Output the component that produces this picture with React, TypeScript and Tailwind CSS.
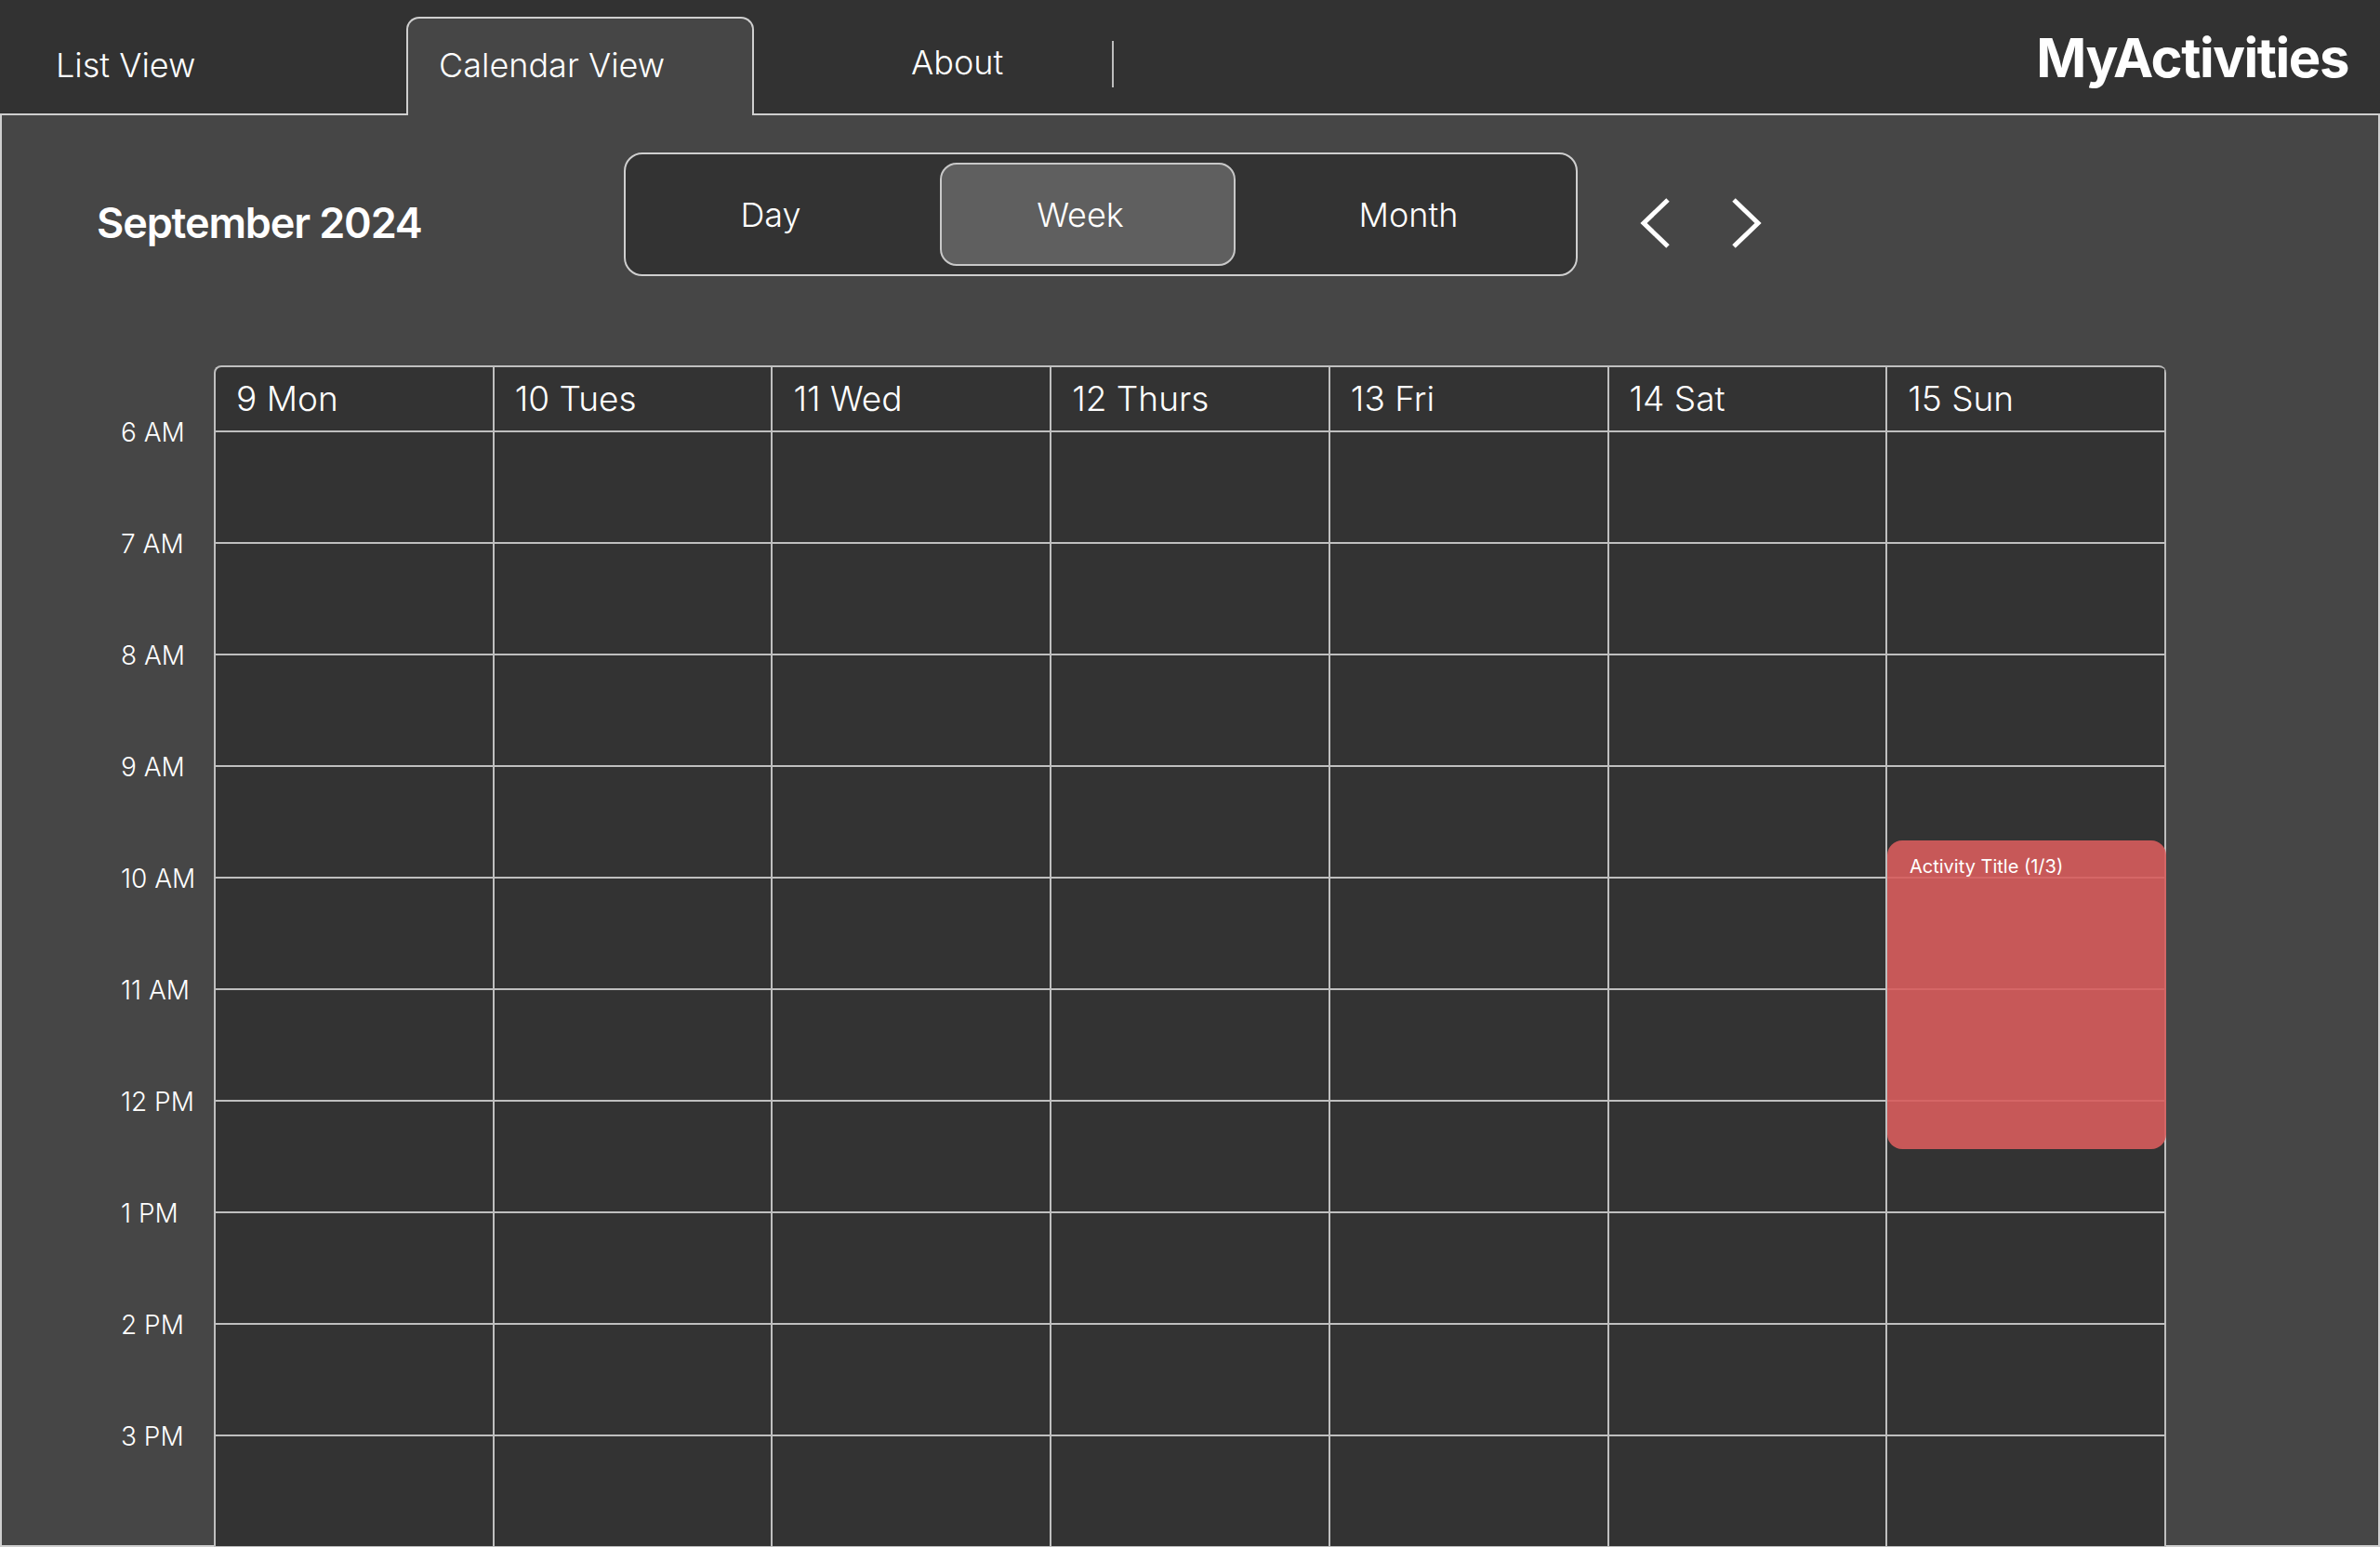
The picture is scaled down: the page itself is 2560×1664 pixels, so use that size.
import React from "react";

const days = ["9 Mon", "10 Tues", "11 Wed", "12 Thurs", "13 Fri", "14 Sat", "15 Sun"];
const hours = ["6 AM", "7 AM", "8 AM", "9 AM", "10 AM", "11 AM", "12 PM", "1 PM", "2 PM", "3 PM"];

const Chevron = ({ dir }: { dir: "left" | "right" }) => (
  <svg width="34" height="54" viewBox="0 0 34 54" fill="none">
    <polyline
      points={dir === "left" ? "30,2 4,27 30,52" : "4,2 30,27 4,52"}
      stroke="white"
      strokeWidth="5"
      strokeLinejoin="miter"
    />
  </svg>
);

const Header = () => {
  return (
    <header className="flex h-[122px] shrink-0 items-start text-white">
      <div className="w-[437px] pl-[60px] pt-[48px] text-[36px] font-light leading-[44px]">List View</div>
      <div className="relative z-10 mt-[18px] h-[106px] w-[374px] rounded-t-[14px] border-2 border-b-0 border-[#cfcfcf] bg-[#464646] pl-[33px] pt-[28px] text-[36px] font-light leading-[44px]">
        Calendar View
      </div>
      <div className="ml-[169px] pt-[45px] text-[36px] font-light leading-[44px]">About</div>
      <div className="ml-[117px] mt-[44px] h-[50px] w-[2px] bg-[#bdbdbd]" />
      <div className="ml-auto pr-[34px] pt-[27px] text-[58px] font-bold leading-[70px] tracking-tight">MyActivities</div>
    </header>
  );
};

const Toolbar = () => {
  return (
    <div className="flex items-start text-white">
      <div className="w-[669px] pl-[102px] pt-[88px] text-[45px] font-semibold leading-[56px] tracking-tight">
        September 2024
      </div>
      <div className="mt-[40px] flex h-[133px] w-[1026px] items-center rounded-[20px] border-2 border-[#cfcfcf] bg-[#333333] px-[10px] text-[36px] font-light leading-[44px]">
        <div className="w-[292px] text-center">Day</div>
        <div className="ml-[36px] flex h-[111px] w-[318px] items-center justify-center rounded-[18px] border-2 border-[#c8c8c8] bg-[#5f5f5f] pr-[16px]">
          Week
        </div>
        <div className="flex-1 pl-[16px] text-center">Month</div>
      </div>
      <div className="ml-[67px] mt-[89px] flex gap-[63px]">
        <Chevron dir="left" />
        <Chevron dir="right" />
      </div>
    </div>
  );
};

const WeekGrid = () => {
  return (
    <div className="mt-[96px] flex items-start text-white">
      <div className="w-[228px] shrink-0 pl-[128px] pt-[54px]">
        {hours.map((h) => (
          <div key={h} className="h-[120px] text-[28px] font-light leading-[36px]">
            {h}
          </div>
        ))}
      </div>
      <div className="relative grid w-[2100px] shrink-0 grid-cols-7 overflow-hidden rounded-t-[8px] border-l-2 border-t-2 border-[#bfbfbf] bg-[#333333]">
        {days.map((d) => (
          <div key={d} className="flex h-[70px] items-center border-b-2 border-r-2 border-[#bfbfbf] pl-[22px] text-[37px] font-light">
            {d}
          </div>
        ))}
        {hours.map((h) =>
          days.map((d) => <div key={h + d} className="h-[120px] border-b-2 border-r-2 border-[#bfbfbf]" />)
        )}
        <div className="absolute left-[1798px] top-[509px] h-[332px] w-[300px] rounded-[16px] bg-[rgba(215,92,92,0.9)] pl-[24px] pt-[14px] text-[20px] leading-[28px]">
          Activity Title (1/3)
        </div>
      </div>
    </div>
  );
};

export default function App() {
  return (
    <div className="flex h-[1664px] w-[2560px] flex-col overflow-hidden bg-[#323232] font-['Inter',sans-serif]">
      <Header />
      <main className="min-h-0 flex-1 border-2 border-[#cfcfcf] bg-[#464646]">
        <Toolbar />
        <WeekGrid />
      </main>
    </div>
  );
}
